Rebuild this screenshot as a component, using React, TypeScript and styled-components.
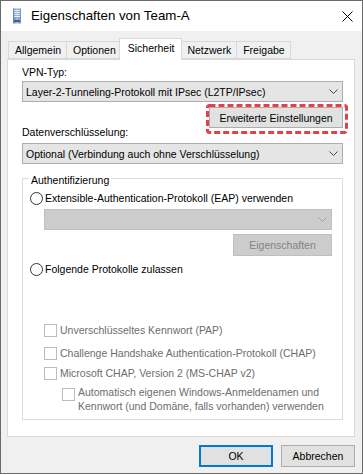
import React from 'react';
import styled, { createGlobalStyle } from 'styled-components';

const GlobalStyle = createGlobalStyle`
  html, body {
    margin: 0;
    padding: 0;
    background: #ffffff;
  }
  body {
    font-family: 'Liberation Sans', Arial, sans-serif;
    font-size: 10.5px;
    line-height: 14px;
    color: #000000;
  }
  * {
    box-sizing: border-box;
  }
`;

const Window = styled.div`
  width: 363px;
  height: 474px;
  border: 1px solid #6a6a6a;
  background: #f0f0f0;
  display: flex;
  flex-direction: column;
`;

const TitleBar = styled.div`
  height: 30px;
  background: #ffffff;
  display: flex;
  align-items: center;
  padding: 0 9px 0 11px;
`;

const Title = styled.span`
  flex: 1;
  margin-left: 9px;
  font-size: 13.3px;
`;

const Body = styled.div`
  flex: 1;
  display: flex;
  flex-direction: column;
  padding: 7px 7px 6px 6px;
`;

const TabStrip = styled.div`
  display: flex;
  align-items: flex-end;
  height: 21px;
  padding-left: 1px;
`;

const Tab = styled.div<{ $active?: boolean }>`
  position: relative;
  display: flex;
  align-items: center;
  height: ${(p) => (p.$active ? '22px' : '18px')};
  margin: ${(p) => (p.$active ? '0 -2px -1px -2px' : '0')};
  padding: ${(p) => (p.$active ? '0 7px 3px 8px' : '0 5px 0 6px')};
  border: 1px solid #d9d9d9;
  border-bottom: ${(p) => (p.$active ? 'none' : '1px solid #d9d9d9')};
  border-right: ${(p) => (p.$active ? '1px solid #d9d9d9' : 'none')};
  background: ${(p) => (p.$active ? '#ffffff' : '#f0f0f0')};
  z-index: ${(p) => (p.$active ? 2 : 1)};
  white-space: nowrap;

  &:last-child {
    border-right: 1px solid #d9d9d9;
  }
`;

const Panel = styled.div`
  flex: 1;
  background: #ffffff;
  border: 1px solid #d9d9d9;
  padding: 5px 11px 0 14px;
  display: flex;
  flex-direction: column;
`;

const Label = styled.div<{ $top?: number }>`
  margin-top: ${(p) => p.$top ?? 0}px;
  height: 14px;
`;

const Select = styled.div<{ $disabled?: boolean; $top?: number; $indent?: number }>`
  display: flex;
  align-items: center;
  justify-content: space-between;
  height: 21px;
  margin-top: ${(p) => p.$top ?? 0}px;
  margin-left: ${(p) => p.$indent ?? 0}px;
  padding: 0 4px 0 3px;
  background: ${(p) => (p.$disabled ? '#cccccc' : '#e5e5e5')};
  border: 1px solid ${(p) => (p.$disabled ? '#bfbfbf' : '#adadad')};
  color: #000000;
  white-space: nowrap;
`;

const ButtonRow = styled.div<{ $top?: number }>`
  display: flex;
  justify-content: flex-end;
  margin-top: ${(p) => p.$top ?? 0}px;
`;

const Button = styled.div<{ $width: number; $height?: number; $disabled?: boolean; $default?: boolean }>`
  position: relative;
  display: flex;
  align-items: center;
  justify-content: center;
  width: ${(p) => p.$width}px;
  height: ${(p) => p.$height ?? 21}px;
  background: ${(p) => (p.$disabled ? '#cccccc' : '#e1e1e1')};
  border: ${(p) => (p.$default ? '2px solid #0078d7' : p.$disabled ? '1px solid #bfbfbf' : '1px solid #adadad')};
  color: ${(p) => (p.$disabled ? '#838383' : '#000000')};
  white-space: nowrap;
`;

const Highlight = styled.svg`
  position: absolute;
  left: -4px;
  top: -4px;
  width: 142px;
  height: 30px;
  overflow: visible;
  pointer-events: none;
`;

const GroupBox = styled.fieldset`
  margin: 5px 0 0 0;
  padding: 4px 10px 6px 7px;
  border: 1px solid #dcdcdc;
  min-width: 0;
`;

const Legend = styled.legend`
  margin-left: -1px;
  padding: 4px 2px 0;
  line-height: 14px;
`;

const OptionRow = styled.div<{ $top?: number; $indent?: number; $disabled?: boolean }>`
  display: flex;
  align-items: center;
  min-height: 14px;
  margin-top: ${(p) => p.$top ?? 0}px;
  margin-left: ${(p) => p.$indent ?? 0}px;
  color: ${(p) => (p.$disabled ? '#6d6d6d' : '#000000')};
  white-space: nowrap;
`;

const MultiRow = styled(OptionRow)`
  align-items: flex-start;
`;

const Radio = styled.span`
  width: 13px;
  height: 13px;
  border: 1px solid #333333;
  border-radius: 50%;
  background: #ffffff;
  margin-right: 2px;
  flex-shrink: 0;
`;

const Checkbox = styled.span<{ $offset?: number }>`
  width: 13px;
  height: 13px;
  border: 1px solid #bcbcbc;
  background: #ffffff;
  margin-right: 3px;
  margin-top: ${(p) => p.$offset ?? 0}px;
  flex-shrink: 0;
`;

const Footer = styled.div`
  display: flex;
  justify-content: flex-end;
  gap: 8px;
  margin-top: 8px;
`;

const Chevron = ({ color }: { color: string }) => (
  <svg width="9" height="5" viewBox="0 0 9 5">
    <polyline points="0.5,0.5 4.5,4.5 8.5,0.5" fill="none" stroke={color} strokeWidth="1" />
  </svg>
);

const TitleIcon = () => (
  <svg width="10" height="16" viewBox="0 0 10 16">
    <defs>
      <linearGradient id="srv" x1="0" y1="0" x2="1" y2="0">
        <stop offset="0" stopColor="#5d7fb8" />
        <stop offset="0.5" stopColor="#a9bedd" />
        <stop offset="1" stopColor="#6f8dc0" />
      </linearGradient>
    </defs>
    <rect x="1" y="0.5" width="8" height="15" fill="url(#srv)" />
    <rect x="2" y="2" width="6" height="1" fill="#e6eef8" />
    <rect x="2" y="4" width="6" height="1" fill="#e6eef8" />
    <rect x="2" y="6" width="6" height="1" fill="#e6eef8" />
    <rect x="2" y="8" width="6" height="1" fill="#e6eef8" />
    <rect x="2" y="12" width="6" height="2" fill="#3b5d98" />
  </svg>
);

const CloseIcon = () => (
  <svg width="11" height="11" viewBox="0 0 11 11">
    <path d="M0.5 0.5 L10.5 10.5 M10.5 0.5 L0.5 10.5" stroke="#000" strokeWidth="1" />
  </svg>
);

const tabs = ['Allgemein', 'Optionen', 'Sicherheit', 'Netzwerk', 'Freigabe'];

export default function App() {
  return (
    <>
      <GlobalStyle />
      <Window>
        <TitleBar>
          <TitleIcon />
          <Title>Eigenschaften von Team-A</Title>
          <CloseIcon />
        </TitleBar>
        <Body>
          <TabStrip>
            {tabs.map((t) => (
              <Tab key={t} $active={t === 'Sicherheit'}>
                {t}
              </Tab>
            ))}
          </TabStrip>
          <Panel>
            <Label>VPN-Typ:</Label>
            <Select $top={2}>
              <span>Layer-2-Tunneling-Protokoll mit IPsec (L2TP/IPsec)</span>
              <Chevron color="#444444" />
            </Select>
            <ButtonRow $top={5}>
              <Button $width={134}>
                Erweiterte Einstellungen
                <Highlight viewBox="0 0 142 30">
                  <rect
                    x="1.5"
                    y="1.5"
                    width="139"
                    height="27"
                    rx="2"
                    fill="none"
                    stroke="#e2404c"
                    strokeWidth="3"
                    strokeDasharray="6 3"
                  />
                </Highlight>
              </Button>
            </ButtonRow>
            <Label $top={-3}>Datenverschlüsselung:</Label>
            <Select $top={4}>
              <span>Optional (Verbindung auch ohne Verschlüsselung)</span>
              <Chevron color="#444444" />
            </Select>
            <GroupBox>
              <Legend>Authentifizierung</Legend>
              <OptionRow>
                <Radio />
                Extensible-Authentication-Protokoll (EAP) verwenden
              </OptionRow>
              <Select $disabled $top={4} $indent={14}>
                <span />
                <Chevron color="#a0a0a0" />
              </Select>
              <ButtonRow $top={4}>
                <Button $width={99} $height={22} $disabled>
                  Eigenschaften
                </Button>
              </ButtonRow>
              <OptionRow $top={6}>
                <Radio />
                Folgende Protokolle zulassen
              </OptionRow>
              <OptionRow $top={47} $indent={14} $disabled>
                <Checkbox />
                Unverschlüsseltes Kennwort (PAP)
              </OptionRow>
              <OptionRow $top={9} $indent={14} $disabled>
                <Checkbox />
                Challenge Handshake Authentication-Protokoll (CHAP)
              </OptionRow>
              <OptionRow $top={6} $indent={14} $disabled>
                <Checkbox />
                Microsoft CHAP, Version 2 (MS-CHAP v2)
              </OptionRow>
              <MultiRow $top={5} $indent={32} $disabled>
                <Checkbox $offset={3} />
                <span>
                  Automatisch eigenen Windows-Anmeldenamen und
                  <br />
                  Kennwort (und Domäne, falls vorhanden) verwenden
                </span>
              </MultiRow>
            </GroupBox>
          </Panel>
          <Footer>
            <Button $width={74} $height={22} $default>
              OK
            </Button>
            <Button $width={74} $height={22}>
              Abbrechen
            </Button>
          </Footer>
        </Body>
      </Window>
    </>
  );
}
